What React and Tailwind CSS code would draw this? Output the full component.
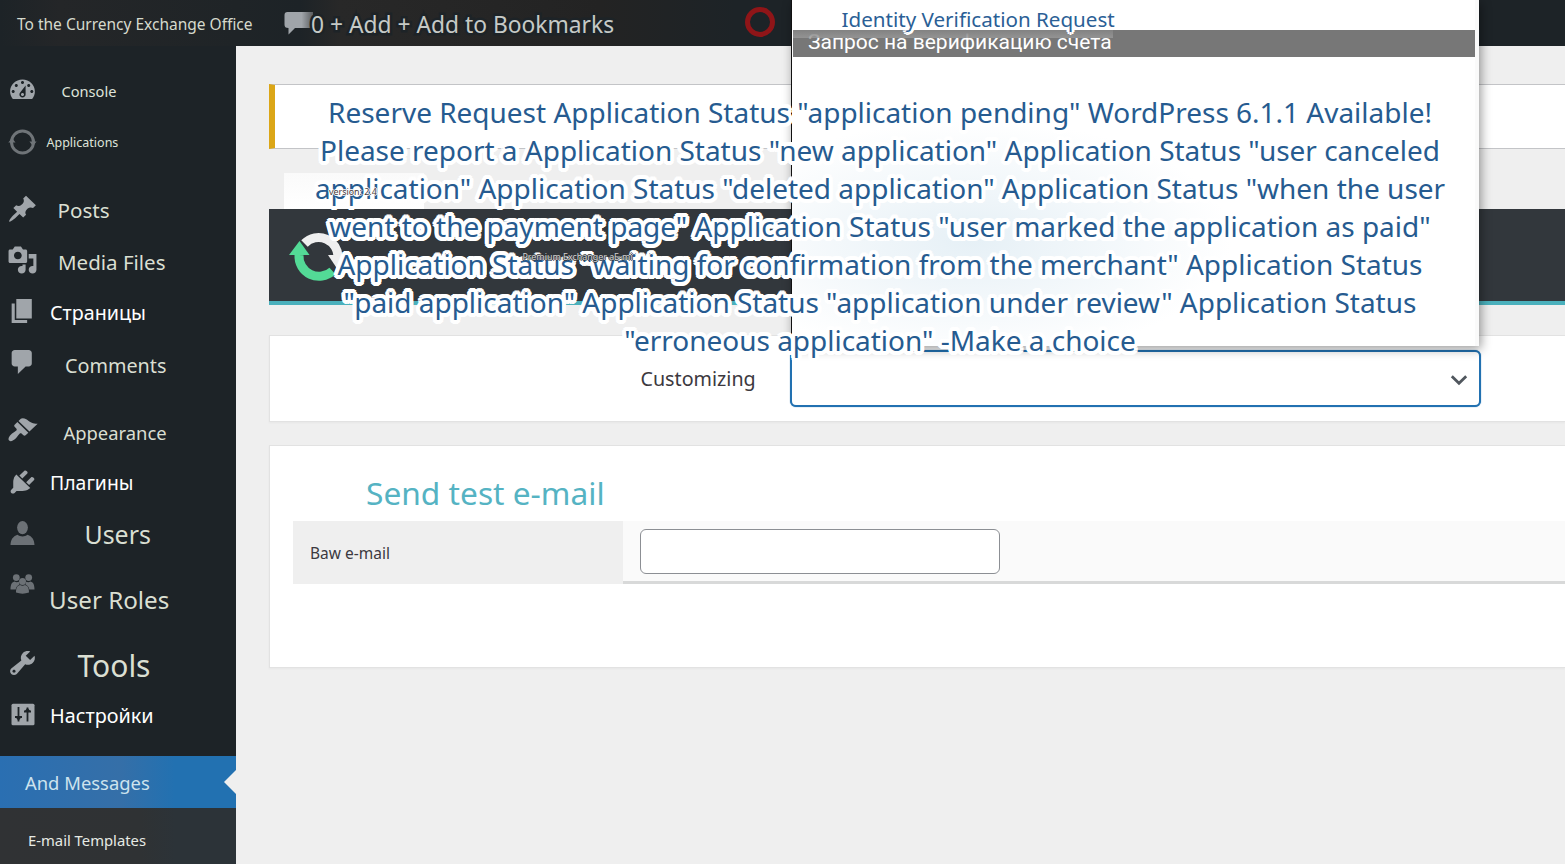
import React from "react";

const FONT = "font-['Noto_Sans',sans-serif]";

const paths = {
  dashboard:
    "M3.76 16h12.48c1.1-1.37 1.76-3.11 1.76-5 0-4.42-3.58-8-8-8s-8 3.58-8 8c0 1.89.66 3.63 1.76 5zM10 4c.55 0 1 .45 1 1s-.45 1-1 1-1-.45-1-1 .45-1 1-1zM6 6c.55 0 1 .45 1 1s-.45 1-1 1-1-.45-1-1 .45-1 1-1zm8 0c.55 0 1 .45 1 1s-.45 1-1 1-1-.45-1-1 .45-1 1-1zm-5.37 5.55L12 7v6c0 1.1-.9 2-2 2s-2-.9-2-2c0-.57.24-1.08.63-1.45zM4 10c.55 0 1 .45 1 1s-.45 1-1 1-1-.45-1-1 .45-1 1-1zm12 0c.55 0 1 .45 1 1s-.45 1-1 1-1-.45-1-1 .45-1 1-1zm-5 3c0-.55-.45-1-1-1s-1 .45-1 1 .45 1 1 1 1-.45 1-1z",
  pin: "M10.44 3.02l1.82-1.82 6.36 6.35-1.83 1.82c-1.05-.68-2.48-.57-3.41.36l-.75.75c-.92.93-1.04 2.35-.35 3.41l-1.83 1.82-2.41-2.41-2.8 2.79c-.42.42-3.38 2.71-3.8 2.29s1.86-3.39 2.28-3.81l2.79-2.79L4.1 9.36l1.83-1.82c1.05.69 2.48.57 3.4-.36l.75-.75c.93-.92 1.05-2.35.36-3.41z",
  media:
    "M13 11V4c0-.55-.45-1-1-1h-1.67L9 1H5L3.67 3H2c-.55 0-1 .45-1 1v7c0 .55.45 1 1 1h10c.55 0 1-.45 1-1zM7 4.5c1.38 0 2.5 1.12 2.5 2.5S8.38 9.5 7 9.5 4.5 8.38 4.5 7 5.62 4.5 7 4.5zM14 6h5v10.5c0 1.38-1.12 2.5-2.5 2.5S14 17.88 14 16.5s1.12-2.5 2.5-2.5c.17 0 .34.02.5.05V9h-3V6zm-4 8.05V13h2v3.5c0 1.38-1.12 2.5-2.5 2.5S7 17.88 7 16.5 8.12 14 9.5 14c.17 0 .34.02.5.05z",
  page: "M6 15V2h10v13H6zm-1 1h8v2H3V5h2v11z",
  comment:
    "M5 2h9c1.1 0 2 .9 2 2v7c0 1.1-.9 2-2 2h-2l-5 5v-5H5c-1.1 0-2-.9-2-2V4c0-1.1.9-2 2-2z",
  brush:
    "M14.48 11.06L7.41 3.99l1.5-1.5c.5-.56 2.3-.47 3.51.32 1.21.8 1.43 1.28 2.91 2.1 1.18.64 2.45 1.26 4.45.85zm-.71.71L6.7 4.7 4.93 6.47c-.39.39-.39 1.02 0 1.41l1.06 1.06c.39.39.39 1.03 0 1.42-.6.6-1.43 1.11-2.21 1.69-.35.26-.7.53-1.01.84C1.43 14.23.4 16.08 1.4 17.07c.99 1 2.84-.03 4.18-1.36.31-.31.58-.66.85-1.02.57-.78 1.08-1.61 1.69-2.21.39-.39 1.02-.39 1.41 0l1.06 1.06c.39.39 1.02.39 1.41 0z",
  plug: "M13.11 4.36L9.87 7.6 8 5.73l3.24-3.24c.35-.34 1.05-.2 1.56.32.52.51.66 1.21.31 1.55zm-8 1.77l.91-1.12 9.01 9.01-1.19.84c-.71.71-2.63 1.16-3.82 1.16H6.14L4.9 17.26c-.59.59-1.54.59-2.12 0-.59-.58-.59-1.53 0-2.12l1.24-1.24v-3.88c0-1.13.4-3.19 1.09-3.89zm7.26 3.97l3.24-3.24c.34-.35 1.04-.21 1.55.31.52.51.66 1.21.31 1.55l-3.24 3.25z",
  wrench:
    "M16.68 9.77c-1.34 1.34-3.3 1.67-4.95.99l-5.41 6.52c-.99.99-2.59.99-3.58 0s-.99-2.59 0-3.57l6.52-5.42c-.68-1.65-.35-3.61.99-4.95 1.28-1.28 3.12-1.62 4.72-1.06l-2.89 2.89 2.82 2.82 2.86-2.87c.53 1.58.18 3.39-1.08 4.65zM3.81 16.21c.4.39 1.04.39 1.43 0 .4-.4.4-1.04 0-1.43-.39-.4-1.03-.4-1.43 0-.39.39-.39 1.03 0 1.43z",
};

function Glyph({ name }) {
  return (
    <svg viewBox="0 0 20 20" preserveAspectRatio="none" className="h-[30px] w-[31px] fill-[#a0a5aa]">
      <path d={paths[name]} fillRule="evenodd" />
    </svg>
  );
}

function SyncGlyph() {
  return (
    <svg viewBox="0 0 31 30" className="h-[30px] w-[31px]">
      <circle cx="15.500" cy="15" r="11" fill="none" stroke="#6f7478" strokeWidth="3" />
      <path d="M22.400 14.500h7.200L26 19z M1.300 15.500h7.200L5 11z" fill="#6f7478" />
    </svg>
  );
}

function UserGlyph() {
  return (
    <svg viewBox="0 0 31 30" className="h-[30px] w-[31px] fill-[#6c7176]">
      <ellipse cx="15.5" cy="9.6" rx="5.4" ry="6.6" />
      <path d="M3.5 27c.2-5 2.200-8.500 7-10.200 3 2.200 7 2.200 10 0 4.800 1.700 6.800 5.200 7 10.200z" />
    </svg>
  );
}

function GroupGlyph() {
  return (
    <svg viewBox="0 0 31 30" className="h-[30px] w-[31px] fill-[#6c7176]">
      <circle cx="9.300" cy="8.600" r="3.400" />
      <circle cx="21.700" cy="8.600" r="3.400" />
      <path d="M3.500 20.500c0-4 .8-7.300 4-8 1.500.9 3 .9 4.300.2l.7 2.800c-2.500 1.200-3.500 3-3.800 5z" />
      <path d="M27.500 20.500c0-4-.8-7.300-4-8-1.500.9-3 .9-4.300.2l-.7 2.800c2.500 1.200 3.500 3 3.800 5z" />
      <circle cx="15.500" cy="12.600" r="3.500" />
      <path d="M9 23.500c0-3.500.6-6.500 4-7.400 1.800 1 3.200 1 5 0 3.400.9 4 3.900 4 7.400-4 1.500-9 1.500-13 0z" />
    </svg>
  );
}

function SettingsGlyph() {
  return (
    <svg viewBox="0 0 31 30" className="h-[30px] w-[31px]">
      <rect x="4.500" y="3.800" width="23" height="21.400" rx="1.500" fill="#a0a5aa" />
      <g stroke="#1d2327" fill="none">
        <path d="M11.500 7v14.500M20.500 7.500v14" strokeWidth="1.800" />
        <path d="M8 17h7M17 11.500h7" strokeWidth="2.200" />
      </g>
      <path d="M8.800 17.500h5.400l-2.700 3.200z M17.800 11h5.400l-2.700-3.200z" fill="#1d2327" />
    </svg>
  );
}

const menu = [
  { text: "Console", icon: <Glyph name="dashboard" />, row: "h-[52px]", label: "ml-[15.5px] mt-[2px] text-[14.6px] text-[#dfe3da]" },
  { text: "Applications", icon: <SyncGlyph />, row: "h-[51px]", label: "ml-[0.5px] mt-[4px] text-[12.5px] text-[#dfe3da]" },
  { text: "Posts", icon: <Glyph name="pin" />, row: "mt-[17px] h-[50px]", label: "ml-[11.5px] mt-[2px] text-[20.6px] text-[#dadfd2]" },
  { text: "Media Files", icon: <Glyph name="media" />, row: "h-[51px]", label: "ml-[12px] mt-[5px] text-[20.5px] text-[#dadfd2]" },
  { text: "Страницы", icon: <Glyph name="page" />, row: "h-[52px]", label: "ml-[4px] mt-[4px] text-[19.7px] text-white" },
  { text: "Comments", icon: <Glyph name="comment" />, row: "h-[50px]", label: "ml-[19px] mt-[7px] text-[19.8px] text-[#dadfd2]" },
  { text: "Appearance", icon: <Glyph name="brush" />, row: "mt-[17px] h-[52px]", label: "ml-[17.5px] mt-[6px] text-[18.4px] text-[#dadfd2]" },
  { text: "Плагины", icon: <Glyph name="plug" />, row: "h-[52px]", label: "ml-[4px] mt-[2px] text-[19.4px] text-white" },
  { text: "Users", icon: <UserGlyph />, row: "h-[50px]", label: "ml-[38.5px] mt-[2px] text-[24.9px] text-[#dadfd2]" },
  { text: "User Roles", icon: <GroupGlyph />, row: "h-[52px]", label: "ml-[3px] mt-[33px] text-[24.2px] text-[#dadfd2]" },
  { text: "Tools", icon: <Glyph name="wrench" />, row: "mt-[27px] h-[52px]", label: "ml-[31.5px] mt-[5px] text-[30px] text-[#dadfd2]" },
  { text: "Настройки", icon: <SettingsGlyph />, row: "h-[51px]", label: "ml-[4px] mt-[3px] text-[19.8px] text-white" },
];

const statusLines = [
  'Reserve Request Application Status "application pending" WordPress 6.1.1 Available!',
  'Please report a Application Status "new application" Application Status "user canceled',
  'application" Application Status "deleted application" Application Status "when the user',
  'went to the payment page" Application Status "user marked the application as paid"',
  'Application Status "waiting for confirmation from the merchant" Application Status',
  '"paid application" Application Status "application under review" Application Status',
  '"erroneous application" -Make a choice',
];

function TopBar() {
  return (
    <header className="flex h-[46px] items-center bg-[#1d2327] bg-[linear-gradient(90deg,#1d2327_0px,#242628_60px,#1f2427_236px,#1d2327_300px,#282828_340px,#232323_600px,#1d2327_735px)]">
      <div className="ml-[17px] mt-[3px] w-[264px] whitespace-nowrap text-[15.500px] text-[#d6dacd]">
        To the Currency Exchange Office
      </div>
      <svg viewBox="0 0 32 24" className="h-[24px] w-[32px]">
        <defs>
          <linearGradient id="bubbleFade">
            <stop offset="0.6" stopColor="#a0a5aa" />
            <stop offset="1" stopColor="#5a5d60" />
          </linearGradient>
        </defs>
        <path d="M6.500 1H32v16H14l-6.500 6.500V17c-3 0-4-1-4-3.500V4c0-2 1-3 3-3z" fill="url(#bubbleFade)" />
      </svg>
      <div className="ml-[-2px] mt-[4px] w-[434px] whitespace-nowrap text-[22.8px] text-[#c6cac6] [-webkit-text-stroke:5px_#1d2327] [paint-order:stroke_fill]">
        0 + Add + Add to Bookmarks
      </div>
      <span className="mb-[2px] h-[30px] w-[30px] rounded-full border-[5px] border-[#8f1518]" />
    </header>
  );
}

function Sidebar() {
  return (
    <nav className="flex w-[236px] shrink-0 flex-col bg-[#1d2327] pt-[18px]">
      {menu.map((m) => (
        <div key={m.text} className={`flex shrink-0 items-center whitespace-nowrap ${m.row}`}>
          <div className="w-[46px] shrink-0 pl-[7px]">{m.icon}</div>
          <span className={`leading-none ${m.label}`}>{m.text}</span>
        </div>
      ))}
      <div className="mt-[16px] flex h-[52px] shrink-0 items-center justify-between bg-[#2271b1] bg-[linear-gradient(90deg,#2a6fb2,#356fa8_120px,#2271b1_175px)]">
        <span className="ml-[25px] mt-[1px] text-[18.4px] text-[#cde3ee]">And Messages</span>
        <svg viewBox="0 0 12 24" className="h-[24px] w-[12px]">
          <path d="M12 0v24L0 12z" fill="#efefef" />
        </svg>
      </div>
      <div className="flex h-[56px] shrink-0 items-center bg-[#2c3338] bg-[linear-gradient(90deg,#303234,#2f3234_140px,#2c3338_175px)]">
        <span className="ml-[28px] mt-[9px] text-[14.8px] text-[#e6eae4]">E-mail Templates</span>
      </div>
    </nav>
  );
}

function Logo() {
  return (
    <svg viewBox="0 0 60 56" className="ml-[19px] mt-[2px] h-[56px] w-[60px]">
      <path d="M16.500 15.500A19.500 19.500 0 0 1 50 30" fill="none" stroke="#efefef" strokeWidth="9" />
      <path d="M40 27h20L50 42z" fill="#efefef" />
      <path d="M11 27A20 20 0 0 0 44.500 43" fill="none" stroke="#53da96" strokeWidth="9" />
      <path d="M1 27h20.500L11.500 13z" fill="#53da96" />
    </svg>
  );
}

function Main() {
  return (
    <main className="flex min-w-0 flex-1 flex-col pl-[33px] pt-[38px]">
      <div className="h-[65px] shrink-0 border-y border-l-[6px] border-y-[#c3c4c7] border-l-[#dba617] bg-white" />
      <div className="ml-[15px] mt-[24px] h-[36px] w-[140px] shrink-0 bg-white bg-[linear-gradient(180deg,#fafafa,#ffffff)]" />
      <div className="flex h-[96px] shrink-0 items-center border-b-4 border-[#4ab0bc] bg-[#32373c]">
        <Logo />
      </div>
      <section className="mt-[30px] flex h-[87px] shrink-0 items-center border border-r-0 border-[#e2e2e2] bg-white shadow-[0_1px_2px_rgba(0,0,0,0.04)]">
        <span className="ml-[370.500px] w-[149.500px] text-[19.7px] text-[#3c3940]">Customizing</span>
        <div className="flex h-[57px] w-[691px] items-center justify-end rounded-[6px] border-2 border-[#2271b1] bg-white pr-[11px] pt-[3px] shadow-[0_0_1px_#2271b1]">
          <svg viewBox="0 0 18 12" className="h-[12px] w-[18px]">
            <path d="M1.800 2.200L9 9.200l7.200-7" fill="none" stroke="#50575e" strokeWidth="2.800" />
          </svg>
        </div>
      </section>
      <section className="mt-[23px] h-[223px] shrink-0 border border-r-0 border-[#e2e2e2] bg-white pl-[23px] pt-[21px] shadow-[0_1px_2px_rgba(0,0,0,0.04)]">
        <h2 className="ml-[73px] h-[54px] text-[31.700px] leading-[52px] text-[#55b3c3]">Send test e-mail</h2>
        <div className="flex h-[63px]">
          <div className="flex w-[330px] items-center bg-[#efefef]">
            <span className="ml-[17px] mt-[2px] text-[15.500px] text-[#3c3940]">Baw e-mail</span>
          </div>
          <div className="flex-1 border-b-[3px] border-[#d8d9d9] bg-[#fafafa] pl-[17px] pt-[8px]">
            <input className="block h-[45px] w-[360px] rounded-[6px] border border-[#8c8f94] bg-white" />
          </div>
        </div>
      </section>
    </main>
  );
}

function OptionsPopup() {
  return (
    <div className="absolute left-[791px] top-0 h-[346px] w-[688px] border-l border-[#111111] bg-white shadow-[2px_3px_10px_rgba(0,0,0,0.4)]">
      <div className="flex h-full flex-col border-r-4 border-[#fafafa] bg-[radial-gradient(ellipse_260px_120px_at_180px_240px,#e6f0f6,#ffffff)]">
        <div className="relative mt-[30px] ml-px flex h-[27px] shrink-0 items-center overflow-hidden bg-[#777777] pl-[15px]">
          <span className="-mt-[2px] whitespace-nowrap font-['Roboto',sans-serif] text-[21px] text-white">
            Запрос на верификацию счета
          </span>
          <span className="absolute left-0 top-0 h-[8px] w-[320px] bg-[linear-gradient(180deg,#828282,#9a9a9acc)]" />
        </div>
      </div>
    </div>
  );
}

const halo =
  "[text-shadow:4px_0_#fff,3.700px_1.500px_#fff,2.800px_2.800px_#fff,1.500px_3.700px_#fff,0_4px_#fff,-1.500px_3.700px_#fff,-2.800px_2.800px_#fff,-3.700px_1.500px_#fff,-4px_0_#fff,-3.700px_-1.500px_#fff,-2.800px_-2.800px_#fff,-1.500px_-3.700px_#fff,0_-4px_#fff,1.500px_-3.700px_#fff,2.800px_-2.800px_#fff,3.700px_-1.500px_#fff,2px_0_#fff,-2px_0_#fff,0_2px_#fff,0_-2px_#fff]";

const smallHalo =
  "[text-shadow:3px_0_#fff,2px_2px_#fff,0_3px_#fff,-2px_2px_#fff,-3px_0_#fff,-2px_-2px_#fff,0_-3px_#fff,2px_-2px_#fff]";

function Overlays() {
  return (
    <>
      <div className={`absolute left-[841.500px] top-[4.500px] whitespace-nowrap text-[20.600px] leading-[28px] text-[#2b5f96] ${smallHalo}`}>
        Identity Verification Request
      </div>
      <div className={`absolute left-[300px] top-[93px] flex w-[1160px] flex-col items-center text-[27.970px] leading-[38px] text-[#265b90] ${halo}`}>
        {statusLines.map((line) => (
          <span key={line} className="whitespace-nowrap">
            {line}
          </span>
        ))}
      </div>
      <div className="absolute left-[329px] top-[185px] whitespace-nowrap text-[8.900px] leading-[13px] text-[#4a3a3a] [text-shadow:1px_0_#fff,-1px_0_#fff,0_1px_#fff,0_-1px_#fff]">
        version: 2.4
      </div>
      <div className="absolute left-[522.500px] top-[250px] whitespace-nowrap text-[8.900px] leading-[13px] text-[#d0d0d0] [text-shadow:1px_0_#303438,-1px_0_#303438,0_1px_#303438,0_-1px_#303438]">
        Premium Exchanger aE-mi
      </div>
    </>
  );
}

export default function App() {
  return (
    <div className={`relative flex h-[864px] w-[1565px] flex-col overflow-hidden bg-[#efefef] ${FONT}`}>
      <TopBar />
      <div className="flex min-h-0 flex-1">
        <Sidebar />
        <Main />
      </div>
      <OptionsPopup />
      <Overlays />
    </div>
  );
}
